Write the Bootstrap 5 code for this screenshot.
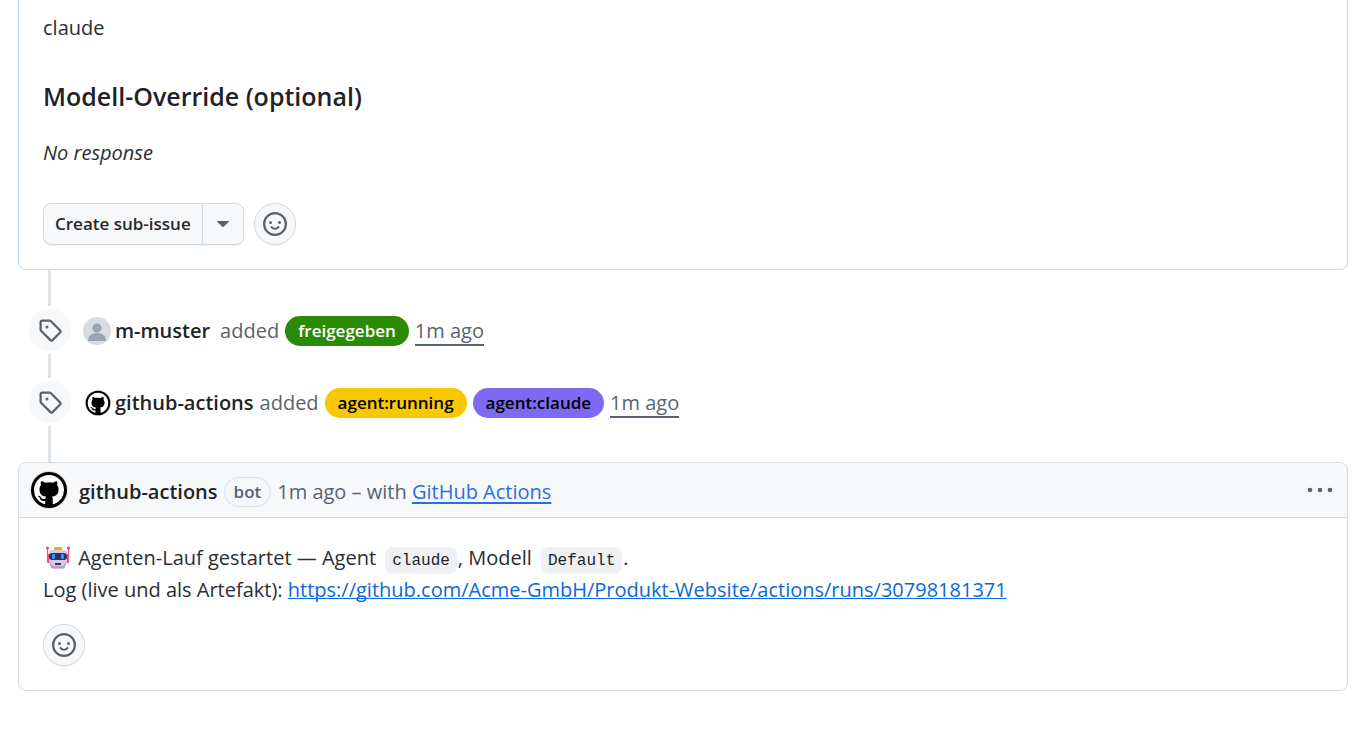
<!DOCTYPE html>
<html lang="de">
<head>
<meta charset="utf-8">
<meta name="viewport" content="width=device-width, initial-scale=1">
<title>Issue</title>
<link rel="stylesheet" href="https://cdn.jsdelivr.net/npm/bootstrap@5.3.0/dist/css/bootstrap.min.css">
<style>
  body { font-family: "Open Sans", "Noto Sans", sans-serif; font-size: 20px; line-height: 32px; color: #1f2328; background: #fff; }
  .page { padding: 0 20px 56px 18px; }
  .page svg { flex: none; display: block; fill: #59636e; }
  .comment { border: 1px solid #d1d9e0; border-radius: 8px; }
  .comment.mine { border-color: #b6d7fb #c8d9ea #c8d9ea #b6d7fb; border-top: 0; border-top-left-radius: 0; border-top-right-radius: 0; }
  .comment-body { padding: 24px; color: #2a2e33; }
  .comment.mine .comment-body { padding-top: 12px; }
  .comment-head { background: #f6f8fa; border-bottom: 1px solid #d1d9e0; border-radius: 7px 7px 0 0; min-height: 55px; padding: 0 12px 0 11px; }
  .head-text { gap: 6px; margin-left: 11px; padding-top: 3px; }
  h3 { font-size: 25px; line-height: 33px; font-weight: 600; color: #1f2328; margin: 36px 0 24px; }
  .actions { gap: 10px; margin-top: 34px; }
  .reactions { margin-top: 18px; }
  .btn-soft { --bs-btn-bg: #f6f8fa; --bs-btn-border-color: #d1d9e0; --bs-btn-color: #25292e; --bs-btn-hover-bg: #eff2f5; --bs-btn-hover-border-color: #d1d9e0; --bs-btn-font-weight: 600; --bs-btn-font-size: 17px; --bs-btn-border-radius: 8px; --bs-btn-line-height: 24px; --bs-btn-padding-y: 8px; --bs-btn-padding-x: 11px; height: 42px; box-shadow: 0 1px 1px #1f23280f; }
  .btn-arrow { width: 42px; --bs-btn-padding-x: 14px; }
  .btn-round { width: 42px; --bs-btn-padding-x: 8px; --bs-btn-border-radius: 50%; }
  .timeline { padding: 36px 0 36px 8px; gap: 24px; background: linear-gradient(#dfe3e8, #dfe3e8) 30px 0 / 3px 100% no-repeat; }
  .event-icon { width: 48px; height: 48px; border: 3px solid #fff; background: #f6f8fa; }
  .event-text { gap: 6px; margin-left: 9px; padding-top: 1px; color: #59636e; }
  .user { font-weight: 600; color: #1f2328; text-decoration: none; }
  .app-avatar { margin: 0 4px 0 2px; }
  .issue-tag { font-size: 17px; line-height: 30px; font-weight: 600; border-radius: 15px; padding: 0 13px; text-decoration: none; }
  .green { background: #2c8b05; color: #fff; }
  .yellow { background: #f9c900; color: #000; }
  .violet { background: #7e69f2; color: #000; }
  .when { color: #59636e; text-decoration: none; border-bottom: 2px solid #59636e; line-height: 26px; padding-top: 2px; }
  .bot { border: 1px solid #dde2e7; border-radius: 15px; font-size: 17px; line-height: 28px; font-weight: 600; padding: 0 9px; }
  .meta { color: #59636e; }
  .app-link { color: #2a6fdb; text-decoration: underline; text-decoration-thickness: 2px; text-underline-offset: 3px; }
  .url { color: #0969da; text-underline-offset: 1px; text-decoration-thickness: 1px; text-decoration-skip-ink: none; }
  code { font-family: "Liberation Mono", monospace; font-size: 16px; line-height: 20px; color: #1f2328; background: #eff0f2; border-radius: 8px; padding: 5px 7px 4px; margin: 0 1px 0 4px; }
  .page svg.robot { display: inline-block; vertical-align: -5px; margin: 0 3px; }
</style>
</head>
<body>
<svg width="0" height="0" class="position-absolute" aria-hidden="true">
  <symbol id="tag" viewBox="0 0 16 16"><path d="M1 7.775V2.75C1 1.784 1.784 1 2.75 1h5.025c.464 0 .91.184 1.238.513l6.25 6.25a1.75 1.75 0 0 1 0 2.474l-5.026 5.026a1.75 1.75 0 0 1-2.474 0l-6.25-6.25A1.752 1.752 0 0 1 1 7.775Zm1.5 0c0 .066.026.13.073.177l6.25 6.25a.25.25 0 0 0 .354 0l5.025-5.025a.25.25 0 0 0 0-.354l-6.25-6.25a.25.25 0 0 0-.177-.073H2.75a.25.25 0 0 0-.25.25ZM6 5a1 1 0 1 1 0 2 1 1 0 0 1 0-2Z"/></symbol>
  <symbol id="smiley" viewBox="0 0 16 16"><path d="M8 0a8 8 0 1 1 0 16A8 8 0 0 1 8 0ZM1.5 8a6.5 6.5 0 1 0 13 0 6.5 6.5 0 0 0-13 0Z" fill-rule="evenodd"/><circle cx="5" cy="7" r="1"/><circle cx="11" cy="7" r="1"/><path d="M5.75 10.1C6.3 10.85 7.1 11.2 8 11.2s1.7-.35 2.25-1.1" fill="none" stroke="#59636e" stroke-width="1.4" stroke-linecap="round"/></symbol>
  <symbol id="mark" viewBox="0 0 38 38"><circle cx="19" cy="19" r="19" fill="#dcdfe2"/><circle cx="19" cy="19" r="18" fill="#000"/><path transform="translate(4 4) scale(1.875)" fill="#fff" d="M8 0c4.42 0 8 3.58 8 8a8.013 8.013 0 0 1-5.45 7.59c-.4.08-.55-.17-.55-.38 0-.27.01-1.13.01-2.2 0-.75-.25-1.23-.54-1.48 1.78-.2 3.65-.88 3.65-3.95 0-.88-.31-1.59-.82-2.15.08-.2.36-1.02-.08-2.12 0 0-.67-.22-2.2.82-.64-.18-1.32-.27-2-.27-.68 0-1.36.09-2 .27-1.53-1.03-2.2-.82-2.2-.82-.44 1.1-.16 1.92-.08 2.12-.51.56-.82 1.28-.82 2.15 0 3.06 1.86 3.75 3.64 3.95-.23.2-.44.55-.51 1.07-.46.21-1.61.55-2.33-.66-.15-.24-.6-.83-1.23-.82-.67.01-.27.38.01.53.34.19.73.9.82 1.13.16.45.68 1.31 2.69.94 0 .67.01 1.3.01 1.49 0 .21-.15.45-.55.38A7.995 7.995 0 0 1 0 8c0-4.42 3.58-8 8-8Z"/></symbol>
</svg>
<main class="page">
  <article class="comment mine">
    <div class="comment-body">
      <p class="m-0">claude</p>
      <h3>Modell-Override (optional)</h3>
      <p class="mb-0"><em>No response</em></p>
      <div class="d-flex actions">
        <div class="btn-group">
          <button type="button" class="btn btn-soft">Create sub-issue</button>
          <button type="button" class="btn btn-soft btn-arrow" aria-label="More options"><svg width="12" height="6" viewBox="0 0 12 6"><path d="M.7 0h10.6c.5 0 .7.6.4.9L6.6 5.7a.9.9 0 0 1-1.2 0L.3.9C0 .6.2 0 .7 0Z"/></svg></button>
        </div>
        <button type="button" class="btn btn-soft btn-round" aria-label="Add reaction"><svg width="24" height="24"><use href="#smiley"/></svg></button>
      </div>
    </div>
  </article>

  <section class="timeline d-flex flex-column">
    <div class="d-flex align-items-center">
      <span class="event-icon rounded-circle d-flex align-items-center justify-content-center"><svg width="24" height="24"><use href="#tag"/></svg></span>
      <div class="event-text d-flex align-items-center">
        <a href="#" class="user d-flex align-items-center"><svg class="me-1" width="28" height="28" viewBox="0 0 28 28"><circle cx="14" cy="14" r="14" fill="#d8dce1"/><circle cx="14" cy="11" r="4.5" fill="#9ba3ae"/><path d="M5 24c0-5 3.500-8 9-8s9 3 9 8Z" fill="#9ba3ae"/></svg>m-muster</a>
        <span class="ms-1">added</span>
        <a href="#" class="issue-tag green">freigegeben</a>
        <a href="#" class="when">1m ago</a>
      </div>
    </div>
    <div class="d-flex align-items-center">
      <span class="event-icon rounded-circle d-flex align-items-center justify-content-center"><svg width="24" height="24"><use href="#tag"/></svg></span>
      <div class="event-text d-flex align-items-center">
        <a href="#" class="user d-flex align-items-center"><svg class="app-avatar" width="26" height="26"><use href="#mark"/></svg>github-actions</a>
        <span>added</span>
        <a href="#" class="issue-tag yellow">agent:running</a>
        <a href="#" class="issue-tag violet">agent:claude</a>
        <a href="#" class="when">1m ago</a>
      </div>
    </div>
  </section>

  <article class="comment">
    <header class="comment-head meta d-flex align-items-center">
      <svg width="38" height="38"><use href="#mark"/></svg>
      <div class="d-flex align-items-center head-text">
        <a href="#" class="user">github-actions</a>
        <span class="bot">bot</span>
        <span>1m ago – with <a href="#" class="app-link">GitHub Actions</a></span>
      </div>
      <button type="button" class="btn p-0 border-0 ms-auto" aria-label="Show options"><svg width="30" height="24" viewBox="0 0 30 24"><circle cx="5" cy="12" r="2.300"/><circle cx="15" cy="12" r="2.300"/><circle cx="25" cy="12" r="2.300"/></svg></button>
    </header>
    <div class="comment-body">
      <p class="m-0"><svg class="robot" width="24" height="24" viewBox="0 0 24 24"><path d="M1.500 2v10M22.500 2v10" stroke="#f04c80" stroke-width="1.200"/><circle cx="1.500" cy="2" r="1.500" fill="#e6447d"/><circle cx="22.500" cy="2" r="1.500" fill="#e6447d"/><rect x="1" y="8" width="3" height="9" rx="1" fill="#f04c80"/><rect x="20" y="8" width="3" height="9" rx="1" fill="#f04c80"/><rect x="8" y="1" width="8" height="4" rx="1" fill="#f3ad17"/><path d="M6 4h12c2 0 3 1 3 3v8l-2 6c-.4 1-1 1.500-2 1.500H7c-1 0-1.600-.5-2-1.500l-2-6V7c0-2 1-3 3-3Z" fill="#d9cbe8"/><path d="M3 15l2 6c.4 1 1 1.500 2 1.500h10c1 0 1.600-.5 2-1.500l2-6-4 5H7Z" fill="#b99bd6"/><rect x="3" y="7" width="18" height="7" rx="3" fill="#303064"/><rect x="6" y="8" width="3" height="5" rx="1" fill="#2c9bf3"/><rect x="15" y="8" width="3" height="5" rx="1" fill="#2c9bf3"/><rect x="9" y="17" width="6" height="2" fill="#35334e"/></svg> Agenten-Lauf gestartet — Agent <code>claude</code>, Modell <code>Default</code>.<br>Log (live und als Artefakt): <a href="#" class="url">https://github.com/Acme-GmbH/Produkt-Website/actions/runs/30798181371</a></p>
      <div class="d-flex reactions">
        <button type="button" class="btn btn-soft btn-round" aria-label="Add reaction"><svg width="24" height="24"><use href="#smiley"/></svg></button>
      </div>
    </div>
  </article>
</main>
<script src="https://cdn.jsdelivr.net/npm/bootstrap@5.3.0/dist/js/bootstrap.bundle.min.js"></script>
</body>
</html>
